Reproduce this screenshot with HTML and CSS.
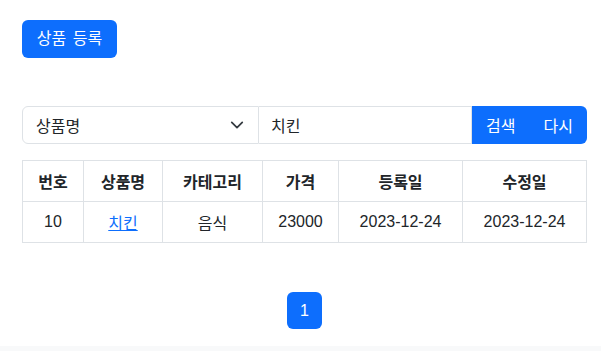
FILE: index.html
```html
<!DOCTYPE html>
<html lang="ko">
<head>
    <meta charset="UTF-8">
    <meta name="viewport" content="width=device-width, initial-scale=1.0">
    <title>상품 목록</title>
    <link rel="stylesheet" href="styles.css">
</head>
<body>
    <div class="container">
        <button class="btn btn-primary btn-register">상품 등록</button>

        <!-- 검색 -->
        <form class="search-group">
            <div class="select-wrap">
                <span>상품명</span>
                <svg width="14" height="14" viewBox="0 0 16 16"><path d="M2 5l6 6 6-6" fill="none" stroke="#343a40" stroke-width="2" stroke-linecap="round" stroke-linejoin="round"/></svg>
            </div>
            <input class="search-input" type="text" value="치킨">
            <div class="btn-group">
                <button type="button" class="btn-search">검색</button>
                <button type="button" class="btn-reset">다시</button>
            </div>
        </form>

        <!-- 상품 목록 -->
        <table>
            <colgroup>
                <col style="width: 61px">
                <col style="width: 79px">
                <col style="width: 100px">
                <col style="width: 76px">
                <col style="width: 124px">
                <col>
            </colgroup>
            <thead>
                <tr>
                    <th>번호</th>
                    <th>상품명</th>
                    <th>카테고리</th>
                    <th>가격</th>
                    <th>등록일</th>
                    <th>수정일</th>
                </tr>
            </thead>
            <tbody>
                <tr>
                    <td>10</td>
                    <td><a href="#">치킨</a></td>
                    <td>음식</td>
                    <td>23000</td>
                    <td>2023-12-24</td>
                    <td>2023-12-24</td>
                </tr>
            </tbody>
        </table>

        <div class="pagination">
            <span class="page active">1</span>
        </div>
    </div>
    <footer></footer>
</body>
</html>
```

FILE: styles.css
```css
body {
    margin: 0;
    font-family: "Liberation Sans", "Noto Sans CJK KR", sans-serif;
    font-size: 16px;
    color: #212529;
    background-color: #fff;
}

.container {
    padding: 20px 14px 0 22px;
}

button {
    font-family: inherit;
    font-size: 16px;
}

.btn-register {
    display: block;
    width: 95px;
    height: 38px;
    padding: 0;
    border: none;
    border-radius: 6px;
    background-color: #0d6efd;
    color: #fff;
    line-height: 38px;
    word-spacing: 2px;
}

/* 검색 */
.search-group {
    display: flex;
    height: 38px;
    margin-top: 48px;
}

.select-wrap {
    width: 237px;
    box-sizing: border-box;
    display: flex;
    align-items: center;
    justify-content: space-between;
    padding: 0 14px 0 13px;
    border: 1px solid #dee2e6;
    border-radius: 6px 0 0 6px;
}

.search-input {
    width: 213px;
    box-sizing: border-box;
    border: 1px solid #dee2e6;
    border-left: none;
    padding: 0 12px;
    font-family: inherit;
    font-size: 16px;
    color: #212529;
    outline: none;
}

.btn-group {
    display: flex;
    flex: 1;
}

.btn-group button {
    flex: 1;
    border: none;
    background-color: #0d6efd;
    color: #fff;
}

.btn-reset {
    border-radius: 0 6px 6px 0;
}

/* 테이블 */
table {
    width: 565px;
    margin-top: 16px;
    border-collapse: collapse;
    table-layout: fixed;
}

th, td {
    border: 1px solid #dee2e6;
    height: 40px;
    padding: 0;
    text-align: center;
    vertical-align: middle;
}

th {
    font-weight: bold;
}

td a {
    color: #0d6efd;
}

/* 페이지 */
.pagination {
    display: flex;
    justify-content: center;
    margin-top: 49px;
}

.page {
    width: 35px;
    height: 37px;
    line-height: 37px;
    text-align: center;
    border-radius: 6px;
    background-color: #0d6efd;
    color: #fff;
}

footer {
    margin-top: 17px;
    height: 20px;
    background-color: #f8f9fa;
}
```
